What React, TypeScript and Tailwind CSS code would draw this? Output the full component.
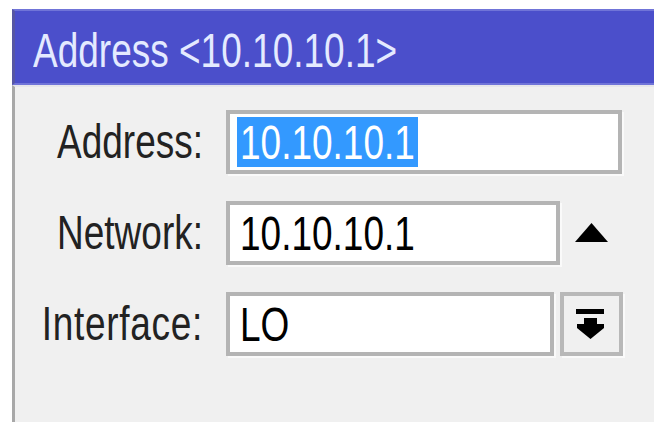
import React from "react";

const font = { fontFamily: '"Liberation Sans", Arial, sans-serif' };

function Tall({ children, className = "" }: { children: React.ReactNode; className?: string }) {
  return (
    <span className={`inline-block origin-center scale-y-[1.3] leading-none ${className}`}>{children}</span>
  );
}

function Label({ text, className = "" }: { text: string; className?: string }) {
  return (
    <div className={`w-[188px] shrink-0 text-right text-[37px] text-[#222222] ${className}`}>
      <Tall>{text}</Tall>
    </div>
  );
}

function Field({ width, children, className = "" }: { width: string; children: React.ReactNode; className?: string }) {
  return (
    <div
      className={`${width} flex h-[64px] shrink-0 items-center border-[4px] border-[#b4b4b4] bg-white shadow-[2px_2px_0_#fafafa] text-[37px] text-black ${className}`}
    >
      {children}
    </div>
  );
}

export default function App() {
  return (
    <div className="h-[422px] w-[654px] overflow-hidden bg-white" style={font}>
      <div className="ml-[12px] mt-[9px] flex h-[413px] flex-col">
        {/* window caption */}
        <div className="flex h-[76px] shrink-0 items-center border-y-[2px] border-l-[3px] border-y-[#7074d8] border-l-[#5656a4] bg-[#4b4fcb] pl-[18px] pt-[6px] text-[37px] text-[#e4eaff]">
          <Tall>Address &lt;10.10.10.1&gt;</Tall>
        </div>

        {/* form body */}
        <div className="flex flex-1 flex-col gap-[27px] border-l-[3px] border-t-[2px] border-l-[#a8a8a8] border-t-[#e6e6ea] bg-[#f0f0f0] pt-[23px]">
          <div className="flex items-center">
            <Label text="Address:" />
            <Field width="w-[396px]" className="ml-[23px] pl-[7px]">
              <span className="flex h-[50px] items-center bg-[#3399ff] px-[3px] text-white">
                <Tall>10.10.10.1</Tall>
              </span>
            </Field>
          </div>

          <div className="flex items-center">
            <Label text="Network:" />
            <Field width="w-[334px]" className="ml-[23px] pl-[10px]">
              <Tall>10.10.10.1</Tall>
            </Field>
            <svg className="ml-[15px]" width="33" height="20" viewBox="0 0 33 20">
              <polygon points="16.5,0 33,19 0,19" fill="#000" />
            </svg>
          </div>

          <div className="flex items-center">
            <Label text="Interface:" className="tracking-[0.7px]" />
            <Field width="w-[328px]" className="ml-[23px] pl-[10px]">
              <Tall>LO</Tall>
            </Field>
            <div className="ml-[6px] flex h-[64px] w-[63px] items-center justify-center border-[4px] border-[#b8b8b8] bg-[#f0f0f0] shadow-[2px_2px_0_#fafafa]">
              <svg width="28" height="31" viewBox="0 0 28 31" className="-ml-[4px]">
                <rect x="0" y="0" width="28" height="5" fill="#000" />
                <polygon points="8,9 21,9 21,15 28,15 28,19 14.5,30 1,19 1,15 8,15" fill="#000" />
              </svg>
            </div>
          </div>
        </div>
      </div>
    </div>
  );
}
